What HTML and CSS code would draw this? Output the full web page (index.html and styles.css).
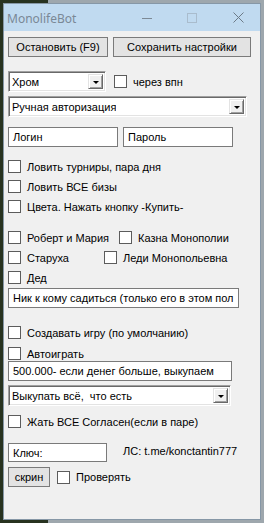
FILE: index.html
```html
<!DOCTYPE html>
<html lang="ru">
<head>
<meta charset="utf-8">
<title>MonolifeBot</title>
<link rel="stylesheet" href="styles.css">
</head>
<body>
<div class="window">
  <div class="titlebar">
    <span class="title">MonolifeBot</span>
    <div class="caption">
      <svg class="cap-min" width="10" height="10" viewBox="0 0 10 10"><line x1="0" y1="5.5" x2="10" y2="5.5" stroke="#7d8a96" stroke-width="1"/></svg>
      <svg class="cap-max" width="10" height="10" viewBox="0 0 10 10"><rect x="0.5" y="0.5" width="9" height="9" fill="none" stroke="#a9bccd" stroke-width="1"/></svg>
      <svg class="cap-close" width="11" height="11" viewBox="0 0 11 11"><path d="M0.5 0.5 L10.5 10.5 M10.5 0.5 L0.5 10.5" stroke="#6c7a87" stroke-width="1" fill="none"/></svg>
    </div>
  </div>
  <div class="client">
    <div class="row r-btns">
      <div class="btn b-stop">Остановить (F9)</div>
      <div class="btn b-save">Сохранить настройки</div>
    </div>
    <div class="row r-browser">
      <div class="combo c-browser"><span class="ctext">Хром</span><span class="dd"><span class="arrow"></span></span></div>
      <div class="chk"><span class="box"></span><span>через впн</span></div>
    </div>
    <div class="row r-auth">
      <div class="combo c-auth"><span class="ctext">Ручная авторизация</span><span class="dd"><span class="arrow"></span></span></div>
    </div>
    <div class="row r-login">
      <div class="input i-login">Логин</div>
      <div class="input i-pass">Пароль</div>
    </div>
    <div class="row chkrow r-c1"><div class="chk"><span class="box"></span><span>Ловить турниры, пара дня</span></div></div>
    <div class="row chkrow r-c2"><div class="chk"><span class="box"></span><span>Ловить ВСЕ бизы</span></div></div>
    <div class="row chkrow r-c3"><div class="chk"><span class="box"></span><span>Цвета. Нажать кнопку -Купить-</span></div></div>
    <div class="row chkrow r-c4">
      <div class="chk w-robert"><span class="box"></span><span>Роберт и Мария</span></div>
      <div class="chk"><span class="box"></span><span>Казна Монополии</span></div>
    </div>
    <div class="row chkrow r-c5">
      <div class="chk w-old"><span class="box"></span><span>Старуха</span></div>
      <div class="chk"><span class="box"></span><span>Леди Монопольевна</span></div>
    </div>
    <div class="row chkrow r-c6"><div class="chk"><span class="box"></span><span>Дед</span></div></div>
    <div class="row r-nick"><div class="input i-nick">Ник к кому садиться (только его в этом пол</div></div>
    <div class="row chkrow r-c7"><div class="chk"><span class="box"></span><span>Создавать игру (по умолчанию)</span></div></div>
    <div class="row chkrow r-c8"><div class="chk"><span class="box"></span><span>Автоиграть</span></div></div>
    <div class="row r-money"><div class="input i-money">500.000- если денег больше, выкупаем</div></div>
    <div class="row r-buy">
      <div class="combo c-buy"><span class="ctext">Выкупать всё,&nbsp; что есть</span><span class="dd"><span class="arrow"></span></span></div>
    </div>
    <div class="row chkrow r-c9"><div class="chk"><span class="box"></span><span>Жать ВСЕ Согласен(если в паре)</span></div></div>
    <div class="row r-key">
      <div class="input i-key">Ключ:</div>
      <span class="contact">ЛС: t.me/konctantin777</span>
    </div>
    <div class="row r-shot">
      <div class="btn b-shot">скрин</div>
      <div class="chk"><span class="box"></span><span>Проверять</span></div>
    </div>
  </div>
</div>
</body>
</html>
```

FILE: styles.css
```css
* { box-sizing: border-box; }
html, body { margin: 0; padding: 0; }
body {
  width: 264px;
  height: 523px;
  overflow: hidden;
  padding: 3px 0 0 3px;
  background:
    linear-gradient(#27321f, #27321f) 0 0 / 48px 100% no-repeat,
    #9ea7ad;
  font-family: "Liberation Sans", Arial, sans-serif;
  font-size: 11px;
  color: #000;
}
.window {
  width: 258px;
  height: 517px;
  border: 1px solid #8697a6;
  background: #f0f0f0;
  display: flex;
  flex-direction: column;
}
.titlebar {
  height: 27px;
  background: #c0daf0;
  display: flex;
  align-items: center;
  justify-content: space-between;
  flex: none;
}
.title {
  font-family: "Noto Sans", "Open Sans", sans-serif;
  font-size: 12px;
  color: #7a8896;
  padding-left: 3px;
  margin-top: 1px;
}
.caption {
  display: flex;
  align-items: center;
  padding-right: 16px;
}
.caption svg { display: block; }
.cap-min { margin-right: 35px; }
.cap-max { margin-right: 36px; }
.client {
  flex: 1;
  padding: 6px 0 0 4px;
  display: flex;
  flex-direction: column;
}
.row { display: flex; align-items: center; }
.btn {
  height: 20px;
  border: 1px solid #7a7a7a;
  background: #e3e3e3;
  display: flex;
  align-items: center;
  justify-content: center;
  white-space: nowrap;
}
.b-stop { width: 100px; }
.b-save { width: 138px; margin-left: 5px; }
.b-shot { width: 42px; }

.combo {
  height: 21px;
  background: #fff;
  border-top: 1px solid #a0a0a0;
  border-left: 1px solid #a0a0a0;
  border-right: 1px solid #fff;
  border-bottom: 1px solid #fff;
  box-shadow: inset 1px 1px 0 #696969, inset -1px -1px 0 #e3e3e3;
  display: flex;
  align-items: center;
  justify-content: space-between;
  padding: 2px 2px 2px 3px;
}
.ctext { white-space: nowrap; overflow: hidden; }
.dd {
  width: 15px;
  height: 15px;
  background: #f0f0f0;
  border-top: 1px solid #e3e3e3;
  border-left: 1px solid #e3e3e3;
  border-right: 1px solid #696969;
  border-bottom: 1px solid #696969;
  box-shadow: inset 1px 1px 0 #fff, inset -1px -1px 0 #a0a0a0;
  display: flex;
  align-items: center;
  justify-content: center;
  flex: none;
}
.arrow {
  width: 0;
  height: 0;
  border-left: 3px solid transparent;
  border-right: 3px solid transparent;
  border-top: 3px solid #000;
  margin-top: 2px;
}
.c-browser { width: 98px; }
.c-auth { width: 239px; }
.c-buy { width: 223px; }

.input {
  height: 20px;
  background: #fff;
  border: 1px solid #7a7a7a;
  display: flex;
  align-items: center;
  padding-left: 4px;
  white-space: nowrap;
  overflow: hidden;
}
.i-login { width: 110px; }
.i-pass { width: 110px; margin-left: 5px; }
.i-nick { width: 231px; }
.i-money { width: 224px; }
.i-key { width: 99px; height: 19px; }

.chk { display: flex; align-items: center; white-space: nowrap; }
.box {
  width: 13px;
  height: 13px;
  background: #fff;
  border: 1px solid #5c5c5c;
  margin-right: 6px;
  flex: none;
}
.chkrow { height: 13px; }
.w-robert { width: 111px; }
.w-old { width: 96px; }

.r-browser { margin-top: 14px; }
.r-browser .chk { margin-left: 8px; }
.r-auth { margin-top: 4px; }
.r-login { margin-top: 10px; }
.r-c1 { margin-top: 13px; }
.r-c2, .r-c3, .r-c5, .r-c6 { margin-top: 7px; }
.r-c4 { margin-top: 18px; }
.r-nick { margin-top: 4px; }
.r-c7 { margin-top: 18px; }
.r-c8 { margin-top: 8px; }
.r-money { margin-top: 1px; }
.r-buy { margin-top: 4px; }
.r-c9 { margin-top: 9px; }
.r-key { margin-top: 15px; align-items: flex-start; }
.contact { margin-left: 16px; margin-top: 2px; }
.r-shot { margin-top: 5px; }
.r-shot .chk { margin-left: 7px; }
```
